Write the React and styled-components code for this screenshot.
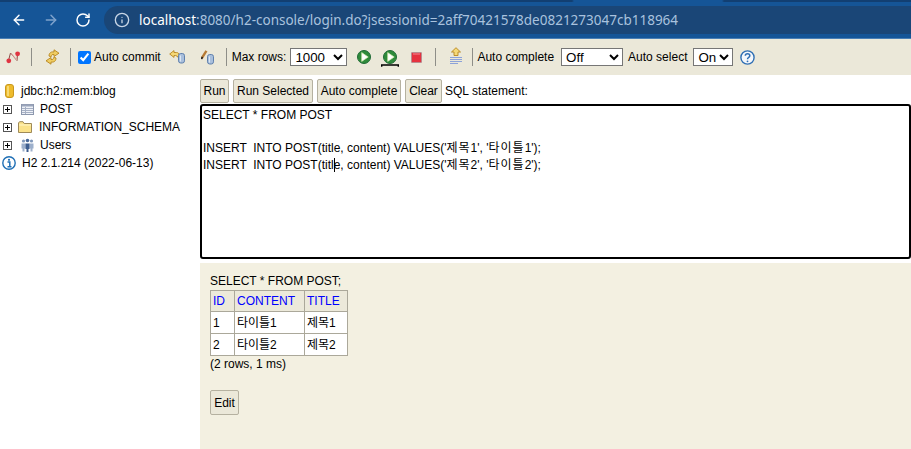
import React from 'react';
import styled, { createGlobalStyle } from 'styled-components';
import { ArrowLeft, ArrowRight, RotateCw, Info } from 'lucide-react';

const GlobalStyle = createGlobalStyle`
  html, body {
    margin: 0;
    padding: 0;
    height: 449px;
    overflow: hidden;
    background: #fff;
    font-family: "Liberation Sans", Arial, "Noto Sans CJK KR", sans-serif;
    font-size: 12px;
    color: #000;
  }
`;

const Page = styled.div`
  display: flex;
  flex-direction: column;
  width: 911px;
  height: 449px;
  overflow: hidden;
`;

// the tab strip shows as a dark line on top, broken where the active tab sits
const BrowserBar = styled.header`
  box-sizing: border-box;
  display: flex;
  align-items: center;
  height: 39px;
  padding: 2px 0 0 11px;
  background:
    linear-gradient(90deg, #123f72 572px, #155597 574px, #155597 722px, #123f72 724px) top / 100% 2px no-repeat,
    #155597;
  border-bottom: 1px solid #4a7fb5;
  color: #fff;
`;

const NavButton = styled.span`
  display: flex;
  justify-content: center;
  width: 16px;
  margin-right: 16px;
  color: ${(p) => (p.$dim ? '#7fa3cc' : '#fff')};

  &:last-of-type {
    margin-right: 13px;
  }
`;

const Omnibox = styled.div`
  display: flex;
  align-items: center;
  flex: 1;
  height: 28px;
  padding-left: 10px;
  border-radius: 14px 0 0 14px;
  background: #1a4677;
  font-family: "Noto Sans", sans-serif;
  font-size: 13.5px;
  white-space: nowrap;
  color: #a9c2de;
`;

const Host = styled.span`
  margin-left: 9px;
  color: #fff;
`;

const Toolbar = styled.div`
  display: flex;
  align-items: center;
  height: 36px;
  padding-left: 6px;
  background: #ebe8d9;
`;

const Separator = styled.i`
  width: 1px;
  height: 18px;
  margin: 0 ${(p) => p.$right ?? 6}px 0 ${(p) => p.$left ?? 6}px;
  background: #8e8e88;
`;

const ToolIcon = styled.svg`
  flex: none;
  margin-left: ${(p) => p.$left ?? 0}px;
  margin-top: ${(p) => p.$top ?? 0}px;
`;

const CheckLabel = styled.label`
  display: flex;
  align-items: center;
`;

const Check = styled.input`
  width: 13px;
  height: 13px;
  margin: 0 3px 0 0;
`;

const Caption = styled.span`
  margin-left: ${(p) => p.$left ?? 0}px;
  white-space: nowrap;
`;

const Select = styled.select`
  width: ${(p) => p.$width}px;
  height: 18px;
  margin-left: ${(p) => p.$left}px;
  font: 13.33px "Liberation Sans", sans-serif;
  background: #fff;
`;

const Main = styled.div`
  display: flex;
  flex: 1;
  min-height: 0;
`;

const Sidebar = styled.aside`
  flex: none;
  width: 198px;
  padding: 7px 0 0 2px;
`;

const TreeRow = styled.div`
  display: flex;
  align-items: center;
  height: 18px;
  white-space: nowrap;
`;

const Expander = styled.span`
  position: relative;
  flex: none;
  box-sizing: border-box;
  width: 9px;
  height: 9px;
  margin-left: 1px;
  border: 1px solid #555;

  &::before,
  &::after {
    content: '';
    position: absolute;
    background: #000;
  }
  &::before {
    left: 1px;
    right: 1px;
    top: 3px;
    height: 1px;
  }
  &::after {
    top: 1px;
    bottom: 1px;
    left: 3px;
    width: 1px;
  }
`;

const TreeIcon = styled.svg`
  flex: none;
  margin-left: ${(p) => p.$left ?? 0}px;
  margin-right: ${(p) => p.$gap ?? 6}px;
`;

const Content = styled.main`
  display: flex;
  flex-direction: column;
  flex: 1;
  min-width: 0;
`;

const ButtonRow = styled.div`
  display: flex;
  align-items: flex-start;
  height: 25px;
  gap: 4px;
  padding-top: 4px;
`;

const Button = styled.button`
  box-sizing: border-box;
  flex: none;
  width: ${(p) => p.$width}px;
  height: 24px;
  padding: 0;
  border: 1px solid #b5b1a0;
  border-radius: 2px;
  background: #ebe8d9;
  font: 12px "Liberation Sans", sans-serif;
  color: #000;
`;

const StatementLabel = styled.span`
  margin-left: -1px;
  line-height: 24px;
  white-space: nowrap;
`;

const Editor = styled.div`
  box-sizing: border-box;
  height: 155px;
  padding: 1px 1px 0;
  border: 2px solid #000;
  border-radius: 3px;
`;

const EditorLine = styled.div`
  height: 16.67px;
  line-height: 16.67px;
  white-space: pre;
`;

const Caret = styled.span`
  display: inline-block;
  width: 1px;
  height: 14px;
  margin: 0 -1px -3px 0;
  background: #000;
`;

// hangul runs wider in the reference's editor than the installed CJK face
const Ko = styled.span`
  letter-spacing: 1px;
`;

const Results = styled.section`
  flex: 1;
  margin-top: 4px;
  padding: 11px 10px;
  background: #f3f0e1;
`;

const ResultTitle = styled.div`
  line-height: 14px;
`;

const Table = styled.table`
  border-collapse: collapse;
  table-layout: fixed;
  width: 137px;
  margin-top: 2px;
  background: #fff;
`;

const Th = styled.th`
  width: ${(p) => p.$width}px;
  box-sizing: border-box;
  height: 21px;
  padding: 0 0 1px 2px;
  border: 1px solid #aba89a;
  background: #ece9da;
  color: #00f;
  font-weight: normal;
  text-align: left;
  white-space: nowrap;
`;

const Td = styled.td`
  height: 21px;
  padding: 0 0 0 2px;
  border: 1px solid #aba89a;
  line-height: 14px;
`;

const Status = styled.div`
  margin-top: 0;
  line-height: 16px;
`;

const EditButton = styled(Button)`
  display: block;
  height: 25px;
  margin-top: 18px;
`;

const ConnectIcon = () => (
  <ToolIcon width="15" height="13" viewBox="0 0 15 13">
    <path d="M2.5 9.5 4.5 2l6.5 7.5L11.5 2.5" fill="none" stroke="#8c4a44" strokeWidth="1" />
    <path d="M5 2.5 11 9" stroke="#e8a0a0" strokeWidth="1" />
    <circle cx="2.8" cy="9.8" r="2.4" fill="#e03441" />
    <circle cx="11.6" cy="2.8" r="2.4" fill="#e03441" />
  </ToolIcon>
);

const RefreshIcon = () => (
  <ToolIcon width="15" height="16" viewBox="0 0 15 16">
    <path d="M4 7C4 3.5 6.5 2.5 9 3V.8L14 4.2 9 7.5V5.5C7.5 5.2 6.2 5.8 6 8z" fill="#f0cd62" stroke="#b8861f" strokeWidth=".9" />
    <path d="M11 9c0 3.5-2.5 4.5-5 4v2.2L1 11.8 6 8.5v2c1.5.3 2.8-.3 3-2.5z" fill="#f0cd62" stroke="#b8861f" strokeWidth=".9" />
  </ToolIcon>
);

const Cylinder = ({ x, y }) => (
  <g>
    <rect x={x + 0.5} y={y + 0.5} width="6" height="9.5" rx="2.2" fill="#a9bfdc" stroke="#5f80ad" />
    <path d={`M${x + 2.5} ${y + 2.5}v6`} stroke="#dce6f3" />
  </g>
);

const RollbackIcon = () => (
  <ToolIcon $left={8} width="17" height="14" viewBox="0 0 17 14">
    <path d="M.7 4 5 .6v1.9h2.500c1.600 0 2.500 1 2.500 2.800v1.500H8c0-1-.5-1.300-1.300-1.300H5v1.900z" fill="#f5d877" stroke="#b8861f" strokeWidth=".9" />
    <Cylinder x={9} y={3} />
  </ToolIcon>
);

const CommitIcon = () => (
  <ToolIcon $left={15} width="14" height="15" viewBox="0 0 14 15">
    <path d="M.8 8.200 5.400.8" stroke="#b67a35" strokeWidth="2.400" />
    <path d="M.4 9 1.500 7" stroke="#222" strokeWidth="1.600" />
    <Cylinder x={6} y={4} />
  </ToolIcon>
);

const PlayIcon = () => (
  <ToolIcon $left={10} width="14" height="14" viewBox="0 0 14 14">
    <circle cx="7" cy="7" r="6.500" fill="#2f8b3b" stroke="#206b36" />
    <path d="M4.700 2.600 11.200 7l-6.500 4.400z" fill="#fff" stroke="#cfe8a8" strokeWidth=".7" />
  </ToolIcon>
);

const PlaySelectedIcon = () => (
  <ToolIcon $left={10} $top={2} width="18" height="17" viewBox="0 0 18 17">
    <circle cx="9" cy="7" r="6.500" fill="#2f8b3b" stroke="#206b36" />
    <path d="M6.700 2.600 13.200 7l-6.500 4.400z" fill="#fff" stroke="#cfe8a8" strokeWidth=".7" />
    <path d="M.7 16.800v-1.800h16.600v1.800" fill="none" stroke="#000" strokeWidth="1.400" />
  </ToolIcon>
);

const StopIcon = () => (
  <ToolIcon $left={12} width="11" height="11" viewBox="0 0 11 11">
    <rect x=".5" y=".5" width="10" height="10" rx=".5" fill="#e6323f" stroke="#b98c90" />
    <path d="M2 2h7" stroke="#f28a92" />
  </ToolIcon>
);

const HistoryIcon = () => (
  <ToolIcon $top={-2} width="12" height="18" viewBox="0 0 12 18">
    <path d="M6 .7 10.500 5H8v3.500H4V5H1.500z" fill="#f5d877" stroke="#b8861f" strokeWidth=".9" />
    <path d="M0 10.500h12M0 12.500h12M0 14.500h12M0 16.500h8" stroke="#8da2d8" />
  </ToolIcon>
);

const HelpIcon = () => (
  <ToolIcon $left={7} width="15" height="15" viewBox="0 0 15 15">
    <circle cx="7.500" cy="7.500" r="6.600" fill="#f4f7fb" stroke="#2f6fb4" strokeWidth="1.400" />
    <path d="M5.300 5.800c0-2.800 4.500-2.800 4.500 0 0 1.700-2.300 1.600-2.300 3.400" fill="none" stroke="#2f6fb4" strokeWidth="1.500" />
    <circle cx="7.500" cy="11.300" r=".9" fill="#2f6fb4" />
  </ToolIcon>
);

const DatabaseIcon = () => (
  <TreeIcon $left={3} $gap={7} width="9" height="14" viewBox="0 0 9 14">
    <rect x=".5" y=".5" width="8" height="13" rx="2.500" fill="#eebb2c" stroke="#c9981f" />
    <path d="M3 2v10" stroke="#fbe58a" strokeWidth="1.500" />
  </TreeIcon>
);

const TableIcon = () => (
  <TreeIcon $left={9} width="13" height="11" viewBox="0 0 13 11">
    <rect x=".5" y=".5" width="12" height="10" fill="#eef1f7" stroke="#8d98ae" />
    <path d="M1 1.500h11" stroke="#9aa5bb" strokeWidth="2" />
    <path d="M1 4.500h11M1 6.500h11M1 8.500h11M4.500 3v7" stroke="#a6b0c4" />
  </TreeIcon>
);

const FolderIcon = () => (
  <TreeIcon $left={6} $gap={7} width="14" height="12" viewBox="0 0 14 12">
    <path d="M.5 11.500V2L1.500.7h3.500L6.200 2.500h7.300v9z" fill="#fbe28a" stroke="#9f8a58" />
    <path d="M1 4h12" stroke="#fff6c8" />
  </TreeIcon>
);

const UsersIcon = () => (
  <TreeIcon $left={9} width="13" height="14" viewBox="0 0 13 14">
    <circle cx="2.500" cy="3" r="1.600" fill="#7f97ba" />
    <circle cx="10.500" cy="3" r="1.600" fill="#7f97ba" />
    <circle cx="6.500" cy="2.500" r="1.800" fill="#4a6a9a" />
    <path d="M.5 5.500h4v5h-1v3h-2v-3h-1zM8.500 5.500h4v5h-1v3h-2v-3h-1z" fill="#9db0cc" />
    <path d="M4.500 5.500h4v5.500h-1v3h-2v-3h-1z" fill="#3f5f90" />
  </TreeIcon>
);

const AboutIcon = () => (
  <TreeIcon width="14" height="14" viewBox="0 0 14 14">
    <circle cx="7" cy="7" r="6.200" fill="#fff" stroke="#1f6fb5" strokeWidth="1.400" />
    <circle cx="7" cy="3.800" r="1.100" fill="#1f6fb5" />
    <path d="M5.500 6h2.300v4.500M5.500 10.700h4" fill="none" stroke="#1f6fb5" strokeWidth="1.500" />
  </TreeIcon>
);

const rows = [
  ['1', '타이틀1', '제목1'],
  ['2', '타이틀2', '제목2'],
];

const App = () => (
  <Page>
    <GlobalStyle />
    <BrowserBar>
      <NavButton><ArrowLeft size={22} strokeWidth={2.2} /></NavButton>
      <NavButton $dim><ArrowRight size={22} strokeWidth={2.2} /></NavButton>
      <NavButton><RotateCw size={20} strokeWidth={2.2} /></NavButton>
      <Omnibox>
        <Info size={16} color="#c8d6e6" strokeWidth={2} />
        <Host>localhost</Host>:8080/h2-console/login.do?jsessionid=2aff70421578de0821273047cb118964
      </Omnibox>
    </BrowserBar>

    <Toolbar>
      <ConnectIcon />
      <Separator $left={10} $right={13} />
      <RefreshIcon />
      <Separator $left={10} $right={7} />
      <CheckLabel>
        <Check type="checkbox" defaultChecked />
        Auto commit
      </CheckLabel>
      <RollbackIcon />
      <CommitIcon />
      <Separator $left={11} $right={5} />
      <Caption>Max rows:</Caption>
      <Select $width={57} $left={4} defaultValue="1000">
        <option>1000</option>
      </Select>
      <PlayIcon />
      <PlaySelectedIcon />
      <StopIcon />
      <Separator $left={13} $right={14} />
      <HistoryIcon />
      <Separator $left={10} $right={4} />
      <Caption>Auto complete</Caption>
      <Select $width={62} $left={7} defaultValue="Off">
        <option>Off</option>
      </Select>
      <Caption $left={5}>Auto select</Caption>
      <Select $width={40} $left={6} defaultValue="On">
        <option>On</option>
      </Select>
      <HelpIcon />
    </Toolbar>

    <Main>
      <Sidebar>
        <TreeRow><DatabaseIcon />jdbc:h2:mem:blog</TreeRow>
        <TreeRow><Expander /><TableIcon />POST</TreeRow>
        <TreeRow><Expander /><FolderIcon />INFORMATION_SCHEMA</TreeRow>
        <TreeRow><Expander /><UsersIcon />Users</TreeRow>
        <TreeRow><AboutIcon />H2 2.1.214 (2022-06-13)</TreeRow>
      </Sidebar>

      <Content>
        <ButtonRow>
          <Button $width={29}>Run</Button>
          <Button $width={80}>Run Selected</Button>
          <Button $width={84}>Auto complete</Button>
          <Button $width={37}>Clear</Button>
          <StatementLabel>SQL statement:</StatementLabel>
        </ButtonRow>

        <Editor>
          <EditorLine>SELECT * FROM POST</EditorLine>
          <EditorLine />
          <EditorLine>
            INSERT  INTO POST(title, content) VALUES('<Ko>제목</Ko>1', '<Ko>타이틀</Ko>1');
          </EditorLine>
          <EditorLine>
            INSERT  INTO POST(titl<Caret />e, content) VALUES('<Ko>제목</Ko>2', '<Ko>타이틀</Ko>2');
          </EditorLine>
        </Editor>

        <Results>
          <ResultTitle>SELECT * FROM POST;</ResultTitle>
          <Table>
            <thead>
              <tr>
                <Th $width={24}>ID</Th>
                <Th $width={70}>CONTENT</Th>
                <Th $width={43}>TITLE</Th>
              </tr>
            </thead>
            <tbody>
              {rows.map(([id, content, title]) => (
                <tr key={id}>
                  <Td>{id}</Td>
                  <Td>{content}</Td>
                  <Td>{title}</Td>
                </tr>
              ))}
            </tbody>
          </Table>
          <Status>(2 rows, 1 ms)</Status>
          <EditButton $width={29}>Edit</EditButton>
        </Results>
      </Content>
    </Main>
  </Page>
);

export default App;
